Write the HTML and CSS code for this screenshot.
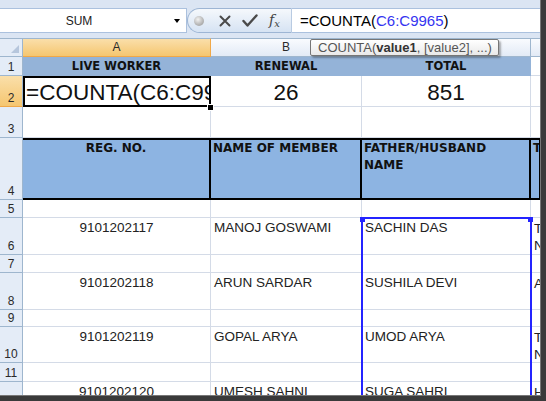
FILE: index.html
```html
<!DOCTYPE html>
<html lang="en">
<head>
  <meta charset="UTF-8" />
  <title>COUNTA – Live worker count</title>
  <link rel="stylesheet" href="styles.css">
</head>
<body>
  <div class="shot">
    <div class="band"></div>

    <div class="fbar">
      <div class="namebox"><span class="name">SUM</span><span class="drop"></span></div>
      <div class="btns">
        <span class="dot"></span>
        <svg class="ico-x" width="12" height="12" viewBox="0 0 12 12"><path d="M1.5 1.5L10.5 10.5M10.5 1.5L1.5 10.5" stroke="#4a4a4a" stroke-width="2" stroke-linecap="round"/></svg>
        <svg class="ico-ok" width="16" height="13" viewBox="0 0 16 13"><path d="M1.5 7L5.5 11.5L14.5 1.5" stroke="#4a4a4a" stroke-width="2.4" fill="none" stroke-linecap="round" stroke-linejoin="round"/></svg>
        <span class="fx"><i>f</i><sub>x</sub></span>
      </div>
      <div class="formula">=COUNTA(<span class="ref">C6:C9965</span>)</div>
    </div>

    <div class="band gap"></div>

    <div class="sheet">
      <div class="row h19">
        <div class="corner"></div>
        <div class="ch sel">A</div>
        <div class="ch">B</div>
        <div class="ch"></div>
        <div class="ch"></div>
      </div>

      <div class="row h19 banner">
        <div class="rh">1</div>
        <div class="c fill">LIVE WORKER</div>
        <div class="c fill">RENEWAL</div>
        <div class="c fill">TOTAL</div>
        <div class="c"></div>
      </div>

      <div class="row h31 totals">
        <div class="rh sel">2</div>
        <div class="c big active">=COUNTA(C6:C99</div>
        <div class="c big center">26</div>
        <div class="c big center">851</div>
        <div class="c"></div>
      </div>

      <div class="row h31">
        <div class="rh">3</div>
        <div class="c"></div>
        <div class="c"></div>
        <div class="c"></div>
        <div class="c"></div>
      </div>

      <div class="row h62 heads">
        <div class="rh">4</div>
        <div class="c center">REG. NO.</div>
        <div class="c">NAME OF MEMBER</div>
        <div class="c">FATHER/HUSBAND NAME</div>
        <div class="c">T</div>
      </div>

      <div class="row h18">
        <div class="rh">5</div>
        <div class="c"></div><div class="c"></div><div class="c"></div><div class="c"></div>
      </div>

      <div class="row h37">
        <div class="rh">6</div>
        <div class="c center">9101202117</div>
        <div class="c">MANOJ GOSWAMI</div>
        <div class="c">SACHIN DAS</div>
        <div class="c wrap">T N</div>
      </div>

      <div class="row h18">
        <div class="rh">7</div>
        <div class="c"></div><div class="c"></div><div class="c"></div><div class="c"></div>
      </div>

      <div class="row h37">
        <div class="rh">8</div>
        <div class="c center">9101202118</div>
        <div class="c">ARUN SARDAR</div>
        <div class="c">SUSHILA DEVI</div>
        <div class="c wrap">A</div>
      </div>

      <div class="row h17">
        <div class="rh">9</div>
        <div class="c"></div><div class="c"></div><div class="c"></div><div class="c"></div>
      </div>

      <div class="row h36">
        <div class="rh">10</div>
        <div class="c center">9101202119</div>
        <div class="c">GOPAL ARYA</div>
        <div class="c">UMOD ARYA</div>
        <div class="c wrap">T N</div>
      </div>

      <div class="row h19">
        <div class="rh">11</div>
        <div class="c"></div><div class="c"></div><div class="c"></div><div class="c"></div>
      </div>

      <div class="row h37">
        <div class="rh">12</div>
        <div class="c center">9101202120</div>
        <div class="c">UMESH SAHNI</div>
        <div class="c">SUGA SAHRI</div>
        <div class="c wrap">H</div>
      </div>

      <!-- overlays: range highlight, fill handle, argument tooltip -->
      <div class="range"></div>
      <div class="fillhandle"></div>
      <div class="tip">COUNTA(<b>value1</b>, [value2], ...)</div>
    </div>
  </div>
</body>
</html>
```

FILE: styles.css
```css
* {
  box-sizing: border-box;
}
html,
body {
  height: 100%;
}
body {
  margin: 0;
  background: #3a3a3a;
  font-family: "Liberation Sans", Arial, sans-serif;
}
.shot {
  position: relative;
  width: 541px;
  height: 396px;
  overflow: hidden;
  background: #fff;
  border-right: 1px solid #777;
  border-bottom: 1px solid #777;
}
.band {
  height: 8px;
  background: #dbe5f3;
}
.band.gap {
  height: 5px;
}

/* formula bar */
.fbar {
  display: flex;
  height: 25px;
  background: #dbe5f3;
}
.namebox {
  width: 187px;
  display: flex;
  align-items: center;
  background: #fff;
  border: 1px solid #abc1de;
  border-left: 0;
}
.name {
  width: 158px;
  text-align: center;
  font-size: 12px;
  color: #222;
}
.drop {
  margin-left: 16px;
  border-top: 4px solid #000;
  border-left: 3.5px solid transparent;
  border-right: 3.5px solid transparent;
}
.btns {
  width: 105px;
  display: flex;
  align-items: center;
  padding-left: 6px;
  background: linear-gradient(#f5f8fc, #d6e3f3);
  border: 1px solid #9db5d4;
  border-right-color: #b9cbe2;
  border-radius: 13px 0 0 13px;
}
.dot {
  width: 10px;
  height: 10px;
  border-radius: 50%;
  background: radial-gradient(circle at 40% 35%, #f2f2f2, #b4b4b4 60%, #9a9a9a);
}
.ico-x {
  margin-left: 15px;
}
.ico-ok {
  margin-left: 11px;
}
.fx {
  margin-left: 11px;
  font-family: "DejaVu Serif", "Liberation Serif", serif;
  font-size: 14px;
  color: #444;
  line-height: 1;
}
.fx sub {
  font-style: italic;
  font-size: 10px;
  vertical-align: -2px;
}
.formula {
  flex: 1;
  display: flex;
  align-items: center;
  padding-left: 8px;
  background: #fff;
  border-top: 1px solid #abc1de;
  border-bottom: 1px solid #abc1de;
  font-size: 15px;
  color: #000;
  white-space: nowrap;
}
.ref {
  color: #3434f0;
}

/* sheet grid */
.sheet {
  position: relative;
}
.row {
  display: grid;
  grid-template-columns: 23px 188px 151px 169px 10px;
}
.h17 { height: 17px; }
.h18 { height: 18px; }
.h19 { height: 19px; }
.h31 { height: 31px; }
.h36 { height: 36px; }
.h37 { height: 37px; }
.h62 { height: 62px; }

.corner {
  display: flex;
  justify-content: flex-end;
  align-items: flex-end;
  padding: 0 3px 3px 0;
  background: #e4ecf7;
  border-top: 1px solid #9eb6ce;
  border-right: 1px solid #9eb6ce;
  border-bottom: 1px solid #9eb6ce;
}
.corner::after {
  content: "";
  border-bottom: 8px solid #b6c6dc;
  border-left: 8px solid transparent;
}
.ch {
  background: linear-gradient(#f9fbfe, #e2eaf6);
  border-top: 1px solid #9eb6ce;
  border-right: 1px solid #9eb6ce;
  border-bottom: 1px solid #9eb6ce;
  text-align: center;
  font-size: 12px;
  line-height: 17px;
  color: #2a2a2a;
}
.ch.sel {
  background: linear-gradient(#fadfaa, #f5c670);
  border-right-color: #f0a848;
  border-bottom-color: #f0a848;
}
.rh {
  display: flex;
  align-items: flex-end;
  justify-content: center;
  padding-bottom: 1px;
  background: #e4ecf7;
  border-right: 1px solid #9eb6ce;
  border-bottom: 1px solid #9eb6ce;
  font-size: 12px;
  line-height: 14px;
  color: #2a2a2a;
}
.rh.sel {
  background: linear-gradient(#fadfaa, #f5c670);
  border-bottom-color: #f0a848;
}

.c {
  overflow: hidden;
  white-space: nowrap;
  padding: 2px 3px 0;
  border-right: 1px solid #d4dbe7;
  border-bottom: 1px solid #d4dbe7;
  font-size: 13.5px;
  line-height: 15px;
  color: #222;
}
.c.wrap {
  white-space: normal;
  line-height: 17px;
}
.center {
  text-align: center;
}

.banner .fill {
  padding: 0;
  background: #94b3d8;
  border-color: #94b3d8;
  text-align: center;
  font: bold 11.5px/18px "DejaVu Sans", sans-serif;
  color: #111;
}

.totals .big {
  display: flex;
  align-items: flex-end;
  padding: 0 3px 2px;
  font-size: 22.5px;
  line-height: 22px;
  color: #111;
}
.totals .big.center {
  justify-content: center;
}
.active {
  outline: 2px solid #000;
  outline-offset: -2px;
}

.heads .c {
  padding: 0 2px;
  white-space: normal;
  background: #8db4e2;
  border-top: 2px solid #000;
  border-right: 2px solid #000;
  border-bottom: 2px solid #000;
  font: bold 12px/17px "DejaVu Sans", sans-serif;
  color: #111;
}
.heads .c.center {
  text-align: center;
}

/* overlays */
.range {
  position: absolute;
  left: 361px;
  top: 179px;
  width: 171px;
  height: 240px;
  border: 2px solid #2424ff;
  border-bottom: 0;
}
.range::before,
.range::after {
  content: "";
  position: absolute;
  top: -2px;
  width: 5px;
  height: 5px;
  background: #2424ff;
}
.range::before {
  left: -3px;
}
.range::after {
  right: -3px;
}
.fillhandle {
  position: absolute;
  left: 207px;
  top: 66px;
  width: 7px;
  height: 7px;
  background: #000;
  border: 1px solid #fff;
}
.tip {
  position: absolute;
  left: 310px;
  top: 1px;
  height: 17px;
  padding: 0 6px 0 7px;
  background: linear-gradient(#ffffff, #e9e9e9);
  border: 1px solid #767676;
  border-radius: 2px;
  box-shadow: 2px 2px 2px rgba(0, 0, 0, 0.3);
  font-size: 13px;
  line-height: 15px;
  color: #555;
  white-space: nowrap;
}
.tip b {
  color: #333;
}
```
